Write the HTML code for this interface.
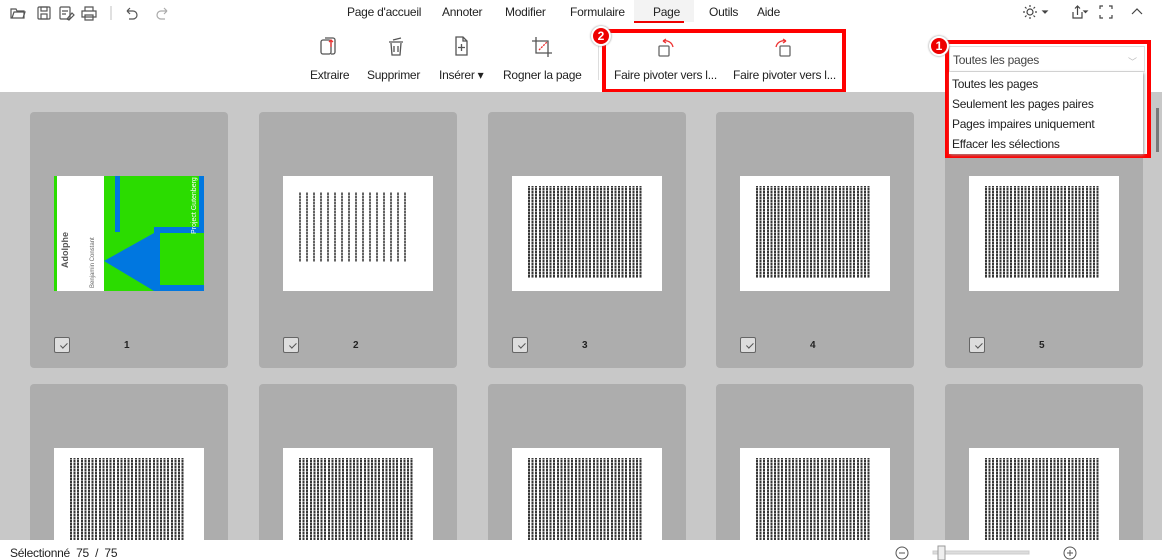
<!DOCTYPE html>
<html><head><meta charset="utf-8"><style>
*{margin:0;padding:0;box-sizing:border-box}
body{width:1162px;height:560px;overflow:hidden;background:#fff;font-family:"Liberation Sans",sans-serif;position:relative;color:#222}
.a{position:absolute}
.t{font-size:12px;letter-spacing:-0.25px;white-space:nowrap}
.grey{left:0;top:92px;width:1162px;height:448px;background:#c8c8c8;overflow:hidden}
.card{position:absolute;width:198px;background:#adadad;border-radius:4px}
.thumb{position:absolute;left:24px;top:64px;width:150px;height:115px;background:#fff}
.txt{position:absolute;left:16px;top:10px;width:115px;height:92px;background:repeating-linear-gradient(0deg,rgba(255,255,255,.45) 0 1px,transparent 1px 3px),repeating-linear-gradient(90deg,rgba(20,20,20,.85) 0 2px,rgba(255,255,255,0) 2px 3.6px)}
.cb{position:absolute;left:24px;top:225px;width:16px;height:16px;border:1px solid #666;border-radius:2px;background:#ddd}
.cb:after{content:"";position:absolute;left:4px;top:2px;width:6px;height:3px;border-left:1px solid #555;border-bottom:1px solid #555;transform:rotate(-45deg) translate(-1px,3px)}
.num{position:absolute;left:94px;top:228px;font-size:10px;font-weight:bold}
svg{position:absolute}
</style></head><body>
<svg style="left:10px;top:5px" width="160" height="16" fill="none" stroke="#555" stroke-width="1.2">
<path d="M1 4h5l1 2h7v7H1z"/><path d="M2 13l2-6h11l-2 6"/>
<rect x="28" y="2" width="12" height="12" rx="1"/><rect x="31" y="2" width="6" height="4"/><rect x="31" y="9" width="6" height="5"/>
<rect x="50" y="2" width="10" height="12" rx="1"/><path d="M52 6h6M52 9h4M57 14l5-6 2 2-5 5z"/>
<path d="M75 6V2h8v4M72 6h14v6H72zM75 10h8v5h-8z"/>
<path d="M101 1v14" stroke="#ccc"/>
<path d="M117 6h6a4 4 0 010 8h-4M117 6l3-3M117 6l3 3"/>
<path d="M157 6h-6a4 4 0 000 8h4M157 6l-3-3M157 6l-3 3" stroke="#aaa"/>
</svg>
<div class="a t" style="left:347px;top:5px">Page d'accueil</div>
<div class="a t" style="left:442px;top:5px">Annoter</div>
<div class="a t" style="left:505px;top:5px">Modifier</div>
<div class="a t" style="left:570px;top:5px">Formulaire</div>
<div class="a" style="left:634px;top:0;width:60px;height:22px;background:#f3f3f3"></div>
<div class="a t" style="left:653px;top:5px">Page</div>
<div class="a" style="left:634px;top:21px;width:50px;height:2px;background:#e00"></div>
<div class="a t" style="left:709px;top:5px">Outils</div>
<div class="a t" style="left:757px;top:5px">Aide</div>
<svg style="left:1020px;top:4px" width="130" height="16" fill="none" stroke="#444" stroke-width="1.2">
<circle cx="10" cy="8" r="3"/><path d="M10 1v2M10 13v2M3 8h2M15 8h2M5 3l1.5 1.5M13.5 11.5L15 13M5 13l1.5-1.5M13.5 4.5L15 3"/>
<path d="M23 7l2 2 2-2z" fill="#444"/>
<path d="M53 8v6h9V8M57.5 11V2M55 4.5l2.5-2.5 2.5 2.5"/><path d="M64 7l1.5 1.5L67 7z" fill="#444"/>
<path d="M80 5V2h3M89 2h3v3M92 11v3h-3M83 14h-3v-3"/>
<path d="M112 10l5-5 5 5"/>
</svg>
<svg style="left:318px;top:35px" width="290" height="28" fill="none" stroke="#555" stroke-width="1.3">
<rect x="3" y="5" width="10" height="14" rx="2"/><path d="M7 3h8a2 2 0 012 2v12a2 2 0 01-2 2H13"/><path d="M13 12V5M11 7l2-2 2 2" stroke="#e33"/>
<path d="M71 7h14M73 8l1 12h8l1-12M76 11v6M80 11v6M75 5l8-2"/>
<path d="M138 2h7l4 4v14h-11z"/><path d="M145 2v4h4M143.5 9v7M140 12.5h7"/>
<path d="M218 2v16h16M214 6h16v16" /><path d="M221 15l8-8" stroke="#e33" stroke-dasharray="2 1"/>
</svg>
<div class="a t" style="left:310px;top:68px">Extraire</div>
<div class="a t" style="left:367px;top:68px">Supprimer</div>
<div class="a t" style="left:439px;top:68px">Insérer ▾</div>
<div class="a t" style="left:503px;top:68px">Rogner la page</div>
<div class="a" style="left:598px;top:40px;width:1px;height:40px;background:#ddd"></div>
<div class="a" style="left:602px;top:29px;width:244px;height:64px;border:4px solid #f00"></div>
<div class="a" style="left:591px;top:26px;width:20px;height:20px;border-radius:50%;background:#e00;border:2px solid #fff;box-shadow:0 0 2px #888;color:#fff;font-size:12px;font-weight:bold;text-align:center;line-height:16px">2</div>
<svg style="left:655px;top:36px" width="150" height="24" fill="none" stroke="#666" stroke-width="1.3">
<rect x="4" y="10" width="10" height="10" rx="1"/><path d="M8 5a8 8 0 0110 6M8 5l3-2M8 5l3 2" stroke="#e33"/>
<rect x="125" y="10" width="10" height="10" rx="1"/><path d="M131 5a8 8 0 00-10 6M131 5l-3-2M131 5l-3 2" stroke="#e33"/>
</svg>
<div class="a t" style="left:614px;top:68px">Faire pivoter vers l...</div>
<div class="a t" style="left:733px;top:68px">Faire pivoter vers l...</div>
<div class="grey a">
<div class="card" style="left:30px;top:20px;height:256px"><div class="thumb" style="background:#2bdc00;overflow:hidden">
<div class="a" style="left:3px;top:0;width:47px;height:115px;background:#fff"></div>
<div class="a" style="left:61px;top:0;width:5px;height:56px;background:#0077e0"></div>
<div class="a" style="left:145px;top:0;width:5px;height:60px;background:#0077e0"></div>
<div class="a" style="left:100px;top:51px;width:50px;height:64px;background:#0077e0"></div>
<div class="a" style="left:106px;top:57px;width:44px;height:52px;background:#2bdc00"></div>
<svg style="left:50px;top:57px" width="56" height="58"><path d="M0 28L50 0v58z" fill="#0077e0"/></svg>
<div class="a" style="left:6px;top:92px;transform:rotate(-90deg);transform-origin:0 0;font-size:9px;font-weight:bold;color:#555;white-space:nowrap">Adolphe</div>
<div class="a" style="left:36px;top:112px;transform:rotate(-90deg);transform-origin:0 0;font-size:6px;color:#666;white-space:nowrap">Benjamin Constant</div>
<div class="a" style="left:137px;top:58px;transform:rotate(-90deg);transform-origin:0 0;font-size:7px;color:#fff;white-space:nowrap">Project Gutenberg</div>
</div><div class="cb"></div><div class="num">1</div></div>
<div class="card" style="left:259px;top:20px;height:256px"><div class="thumb"><div class="txt" style="left:16px;top:16px;width:110px;height:70px;opacity:.7;background:repeating-linear-gradient(0deg,rgba(255,255,255,.5) 0 1px,transparent 1px 3px),repeating-linear-gradient(90deg,#222 0 2px,transparent 2px 7px)"></div></div><div class="cb"></div><div class="num">2</div></div>
<div class="card" style="left:488px;top:20px;height:256px"><div class="thumb"><div class="txt"></div></div><div class="cb"></div><div class="num">3</div></div>
<div class="card" style="left:716px;top:20px;height:256px"><div class="thumb"><div class="txt"></div></div><div class="cb"></div><div class="num">4</div></div>
<div class="card" style="left:945px;top:20px;height:256px"><div class="thumb"><div class="txt"></div></div><div class="cb"></div><div class="num">5</div></div>
<div class="card" style="left:30px;top:292px;height:200px"><div class="thumb"><div class="txt"></div></div></div>
<div class="card" style="left:259px;top:292px;height:200px"><div class="thumb"><div class="txt"></div></div></div>
<div class="card" style="left:488px;top:292px;height:200px"><div class="thumb"><div class="txt"></div></div></div>
<div class="card" style="left:716px;top:292px;height:200px"><div class="thumb"><div class="txt"></div></div></div>
<div class="card" style="left:945px;top:292px;height:200px"><div class="thumb"><div class="txt"></div></div></div>
<div class="a" style="left:1156px;top:16px;width:3px;height:44px;background:#777"></div>
</div>
<div class="a" style="left:945px;top:40px;width:206px;height:118px;border:4px solid #f00;background:#fff"></div>
<div class="a" style="left:949px;top:46px;width:196px;height:26px;border:1px solid #ddd;background:#fff"></div>
<div class="a t" style="left:953px;top:53px;color:#444">Toutes les pages</div>
<div class="a" style="left:1128px;top:55px;font-size:9px;color:#bbb">﹀</div>
<div class="a" style="left:949px;top:72px;width:194px;height:82px;background:#fff;box-shadow:1px 1px 3px #999"></div>
<div class="a t" style="left:952px;top:77px">Toutes les pages</div>
<div class="a t" style="left:952px;top:97px">Seulement les pages paires</div>
<div class="a t" style="left:952px;top:117px">Pages impaires uniquement</div>
<div class="a t" style="left:952px;top:137px">Effacer les sélections</div>
<div class="a" style="left:929px;top:36px;width:20px;height:20px;border-radius:50%;background:#e00;border:2px solid #fff;box-shadow:0 0 2px #888;color:#fff;font-size:12px;font-weight:bold;text-align:center;line-height:16px">1</div>
<div class="a t" style="left:10px;top:546px">Sélectionné&nbsp; 75&nbsp; /&nbsp; 75</div>
<svg style="left:893px;top:545px" width="190" height="15" fill="none" stroke="#555">
<circle cx="9" cy="8" r="6"/><path d="M6 8h6"/>
<rect x="40" y="6" width="96" height="3" fill="#ddd" stroke="#ccc"/><rect x="45" y="1" width="7" height="14" fill="#eee" stroke="#999"/>
<circle cx="177" cy="8" r="6"/><path d="M174 8h6M177 5v6"/>
</svg>
</body></html>
